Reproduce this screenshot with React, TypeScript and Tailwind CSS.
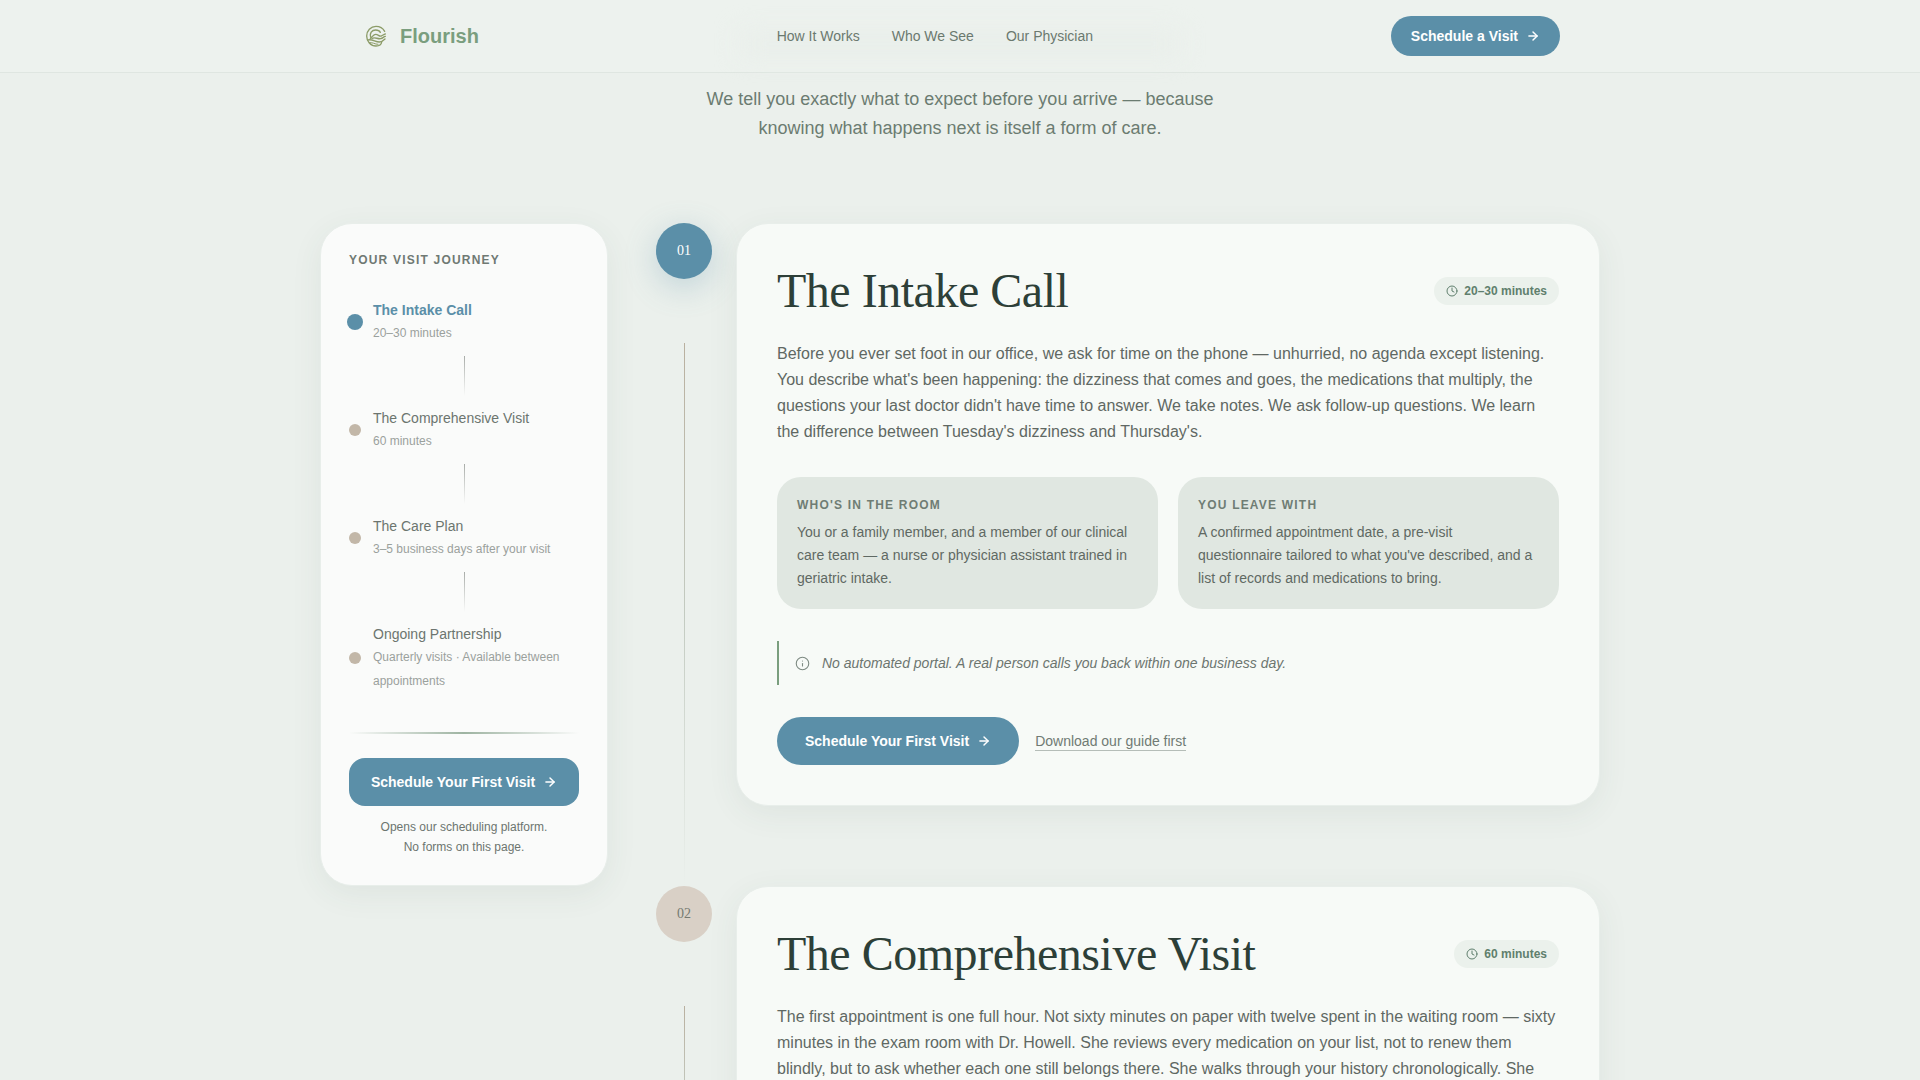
import type { ReactNode } from "react";
import { ArrowRight, Clock, Info } from "lucide-react";

type JourneyItem = { title: string; detail: string; active?: boolean };

const journey: JourneyItem[] = [
  { title: "The Intake Call", detail: "20–30 minutes", active: true },
  { title: "The Comprehensive Visit", detail: "60 minutes" },
  { title: "The Care Plan", detail: "3–5 business days after your visit" },
  { title: "Ongoing Partnership", detail: "Quarterly visits · Available between appointments" },
];

function Logo() {
  return (
    <svg viewBox="0 0 96 96" className="size-8" fill="none" stroke="#8c9c68" strokeWidth="4" strokeLinecap="round" aria-hidden="true">
      <path d="M74 34C69 25 59 19 48 19C32 19 20 32 20 48C20 64 32 78 48 78C58 78 64 74 65 66" />
      <path d="M33 53C27 40 36 30 47 30C54 30 59 33 61 37" />
      <path d="M31 55C38 50 40 43 47 43C55 43 57 50 64 48C69 46 71 43 76 42" />
      <path d="M36 55C46 50 52 58 62 56C69 54 71 50 76 49" />
      <path d="M24 60C36 56 46 66 58 66C66 66 71 61 75 57" />
      <path d="M28 68C38 66 44 73 54 73" strokeWidth="3" />
    </svg>
  );
}

function Header() {
  return (
    <header className="relative border-b border-[#dfe6e1] bg-[#edf2ee]">
      <div
        className="pointer-events-none absolute inset-x-0 top-8 mx-auto h-6 w-110 bg-[#e9eeea] blur-md"
        aria-hidden="true"
      />
      <div className="relative mx-auto flex h-18 max-w-[1200px] items-center justify-between">
        <a href="#top" className="flex items-center gap-2">
          <Logo />
          <span className="text-xl font-bold text-[#7a9e7e]">Flourish</span>
        </a>
        <nav className="flex items-center gap-8 text-sm text-[#6b796f]">
          <a href="#how">How It Works</a>
          <a href="#who">Who We See</a>
          <a href="#physician">Our Physician</a>
        </nav>
        <button type="button" className="flex h-10 items-center gap-2 rounded-full bg-[#5b8fa8] px-5 text-sm font-bold text-white">
          Schedule a Visit
          <ArrowRight className="size-3.5" strokeWidth={2.5} aria-hidden="true" />
        </button>
      </div>
    </header>
  );
}

function JourneyCard() {
  return (
    <aside className="rounded-4xl border border-[#e8eeea] bg-[#fafbfa] p-7 shadow-[0_8px_32px_rgba(60,90,75,0.07)]">
      <h2 className="text-xs font-bold tracking-widest text-[#6f7973] uppercase">Your Visit Journey</h2>
      <ol className="mt-5">
        {journey.map((item, i) => (
          <li key={item.title}>
            {i > 0 && <div className="mx-auto h-10 w-px bg-linear-to-b from-[#a8aca8] to-transparent" />}
            <a href={`#step-${i + 1}`} className="flex items-center gap-3 py-[11px]">
              <span
                className={
                  item.active
                    ? "-mx-0.5 size-4 shrink-0 rounded-full bg-[#5b8fa8]"
                    : "size-3 shrink-0 rounded-full bg-[#c2b7a8]"
                }
              />
              <span className="flex flex-col">
                <span
                  className={
                    item.active
                      ? "text-sm leading-[22px] font-bold text-[#5b8fa8]"
                      : "text-sm leading-[22px] text-[#6c756f]"
                  }
                >
                  {item.title}
                </span>
                <span className="text-xs leading-6 text-[#9aa19d]">{item.detail}</span>
              </span>
            </a>
          </li>
        ))}
      </ol>
      <div className="mt-7 h-0.5 bg-linear-to-r from-transparent via-[#9db3a1] to-transparent" />
      <button type="button" className="mt-6 flex h-12 w-full items-center justify-center gap-2 rounded-2xl bg-[#5b8fa8] text-sm font-bold text-white">
        Schedule Your First Visit
        <ArrowRight className="size-3.5" strokeWidth={2.5} aria-hidden="true" />
      </button>
      <p className="mt-3 text-center text-xs leading-relaxed text-[#6c756f]">
        Opens our scheduling platform.
        <br />
        No forms on this page.
      </p>
    </aside>
  );
}

type StepProps = {
  number: string;
  title: string;
  duration: string;
  active?: boolean;
  body: string;
  children?: ReactNode;
};

function Step({ number, title, duration, active, body, children }: StepProps) {
  return (
    <li className="flex gap-6">
      <div className="flex flex-col items-center">
        <span
          className={
            active
              ? "flex size-14 items-center justify-center rounded-full bg-[#5b8fa8] font-['Liberation_Serif',serif] text-sm text-white shadow-[0_8px_32px_rgba(91,143,168,0.3)]"
              : "flex size-14 items-center justify-center rounded-full bg-[#d9d0c6] font-['Liberation_Serif',serif] text-sm text-[#757a71]"
          }
        >
          {number}
        </span>
        <div className="mt-16 w-px flex-1 bg-linear-to-b from-[#b9b09f] via-[#c3cbc1] to-transparent" />
      </div>
      <div className="min-w-0 flex-1 pb-20">
        <article className="rounded-4xl border border-[#e8eeea] bg-[#f7faf7] p-10 shadow-[0_8px_32px_rgba(60,90,75,0.07)]">
          <div className="flex items-center justify-between">
            <h3 className="font-['Liberation_Serif',serif] text-5xl leading-[53px] tracking-[-0.01em] text-[#2d3f38]">{title}</h3>
            <span className="flex h-7 items-center gap-1.5 rounded-full bg-[#ebf1ec] px-3 text-xs font-bold text-[#5f7f6d]">
              <Clock className="size-3" strokeWidth={2} aria-hidden="true" />
              {duration}
            </span>
          </div>
          <p className="mt-6 text-base leading-relaxed text-[#5f6863]">{body}</p>
          {children}
        </article>
      </div>
    </li>
  );
}

function Fact({ label, text }: { label: string; text: string }) {
  return (
    <div className="rounded-3xl bg-[#e0e7e1] p-5">
      <h4 className="text-xs font-bold tracking-widest text-[#6f7d74] uppercase">{label}</h4>
      <p className="mt-2 text-sm leading-relaxed text-[#5f6963]">{text}</p>
    </div>
  );
}

export default function App() {
  return (
    <div id="top" className="h-screen overflow-hidden bg-[#ebf0ec] font-['Liberation_Sans',Arial,sans-serif]">
      <Header />
      <main className="mx-auto max-w-7xl">
        <p className="mx-auto max-w-[560px] pt-3 text-center text-lg leading-[29px] text-[#6b7c71]">
          We tell you exactly what to expect before you arrive — because knowing what happens next is itself a form of care.
        </p>
        <div className="mt-20 grid grid-cols-[288px_minmax(0,1fr)] items-start gap-12">
          <JourneyCard />
          <ol>
            <Step
              active
              number="01"
              title="The Intake Call"
              duration="20–30 minutes"
              body="Before you ever set foot in our office, we ask for time on the phone — unhurried, no agenda except listening. You describe what's been happening: the dizziness that comes and goes, the medications that multiply, the questions your last doctor didn't have time to answer. We take notes. We ask follow-up questions. We learn the difference between Tuesday's dizziness and Thursday's."
            >
              <div className="mt-8 grid grid-cols-2 gap-5">
                <Fact
                  label="Who's in the room"
                  text="You or a family member, and a member of our clinical care team — a nurse or physician assistant trained in geriatric intake."
                />
                <Fact
                  label="You leave with"
                  text="A confirmed appointment date, a pre-visit questionnaire tailored to what you've described, and a list of records and medications to bring."
                />
              </div>
              <p className="mt-8 flex items-center gap-3 border-l-2 border-[#7a9e7e] py-3 pl-4 text-sm text-[#6c756f] italic">
                <Info className="size-[15px] text-[#7d8a82]" strokeWidth={1.75} aria-hidden="true" />
                No automated portal. A real person calls you back within one business day.
              </p>
              <div className="mt-8 flex items-center gap-4">
                <button type="button" className="flex h-12 items-center gap-2 rounded-full bg-[#5b8fa8] px-7 text-sm font-bold text-white">
                  Schedule Your First Visit
                  <ArrowRight className="size-3.5" strokeWidth={2.5} aria-hidden="true" />
                </button>
                <a href="#guide" className="border-b border-[#b5bdb8] text-sm leading-[18px] text-[#707a74]">
                  Download our guide first
                </a>
              </div>
            </Step>
            <Step
              number="02"
              title="The Comprehensive Visit"
              duration="60 minutes"
              body="The first appointment is one full hour. Not sixty minutes on paper with twelve spent in the waiting room — sixty minutes in the exam room with Dr. Howell. She reviews every medication on your list, not to renew them blindly, but to ask whether each one still belongs there. She walks through your history chronologically. She"
            />
          </ol>
        </div>
      </main>
    </div>
  );
}
